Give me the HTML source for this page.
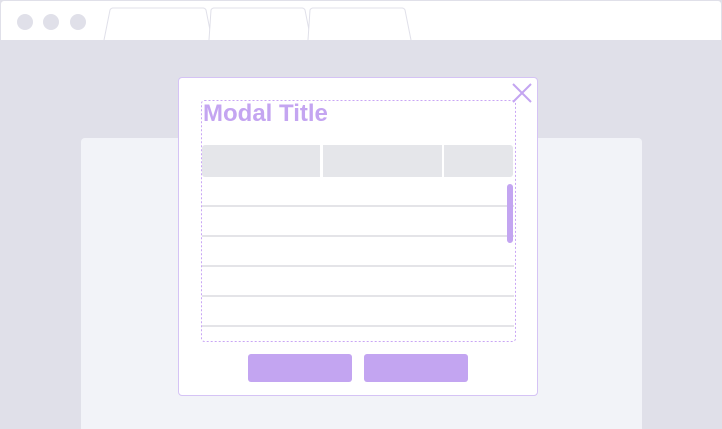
<!DOCTYPE html>
<html><head><style>
html,body{margin:0;width:722px;height:429px;overflow:hidden}
body{background:#e0e0e9;position:relative;font-family:"Liberation Sans",sans-serif}
.top{position:absolute;left:0;top:0;width:720px;height:39px;background:#fff;border:1px solid #e0e0e9;border-bottom:none;border-radius:4px 4px 0 0}
.dot{position:absolute;top:14px;width:16px;height:16px;border-radius:50%;background:#e0e0e9}
.card{position:absolute;left:81px;top:138px;width:561px;height:291px;background:#f2f3f8;border-radius:4px 4px 0 0}
.modal{position:absolute;left:178px;top:77px;width:358px;height:317px;background:#fff;border:1px solid #d5c3f5;border-radius:4px}
.title{position:absolute;left:203px;top:100px;font-size:24px;font-weight:bold;color:#c4a5f1}
.h{position:absolute;top:145px;height:32px;background:#e5e6ea}
.row{position:absolute;left:202px;width:312px;height:2px;background:#e4e4e8}
.btn{position:absolute;top:354px;width:104px;height:28px;background:#c3a5f1;border-radius:3px}
</style></head><body>
<div class="top"></div>
<div class="dot" style="left:17px"></div><div class="dot" style="left:43px"></div><div class="dot" style="left:70px"></div>
<svg style="position:absolute;left:0;top:0" width="722" height="42"><g fill="#fff" stroke="#e0e0e9" stroke-width="1"><path d="M104 40 L110 10 Q111 8 113 8 L203 8 Q205 8 206 10 L212 40"/><path d="M209 40 L211 10 Q212 8 214 8 L302 8 Q304 8 305 10 L311 40"/><path d="M308 40 L310 10 Q311 8 313 8 L402 8 Q404 8 405 10 L411 40"/></g></svg>
<div class="card"></div>
<div class="modal"></div>
<div class="title">Modal Title</div>
<svg style="position:absolute;left:512px;top:83px" width="20" height="20"><path d="M1 1L19 19M19 1L1 19" stroke="#c4a5f1" stroke-width="2"/></svg>
<div class="h" style="left:202px;width:118px;border-radius:3px 0 0 3px"></div>
<div class="h" style="left:323px;width:119px"></div>
<div class="h" style="left:444px;width:69px;border-radius:0 3px 3px 0"></div>
<div class="row" style="top:205px"></div><div class="row" style="top:235px"></div><div class="row" style="top:265px"></div><div class="row" style="top:295px"></div><div class="row" style="top:325px"></div>
<div style="position:absolute;left:507px;top:184px;width:6px;height:59px;background:#c3a5f1;border-radius:3px"></div>
<svg style="position:absolute;left:200px;top:99px" width="317" height="244"><rect x="1.5" y="1.5" width="314" height="241" rx="3" fill="none" stroke="#c9a6f5" stroke-width="1" stroke-dasharray="2 2"/></svg>
<div class="btn" style="left:248px"></div><div class="btn" style="left:364px"></div>
</body></html>
